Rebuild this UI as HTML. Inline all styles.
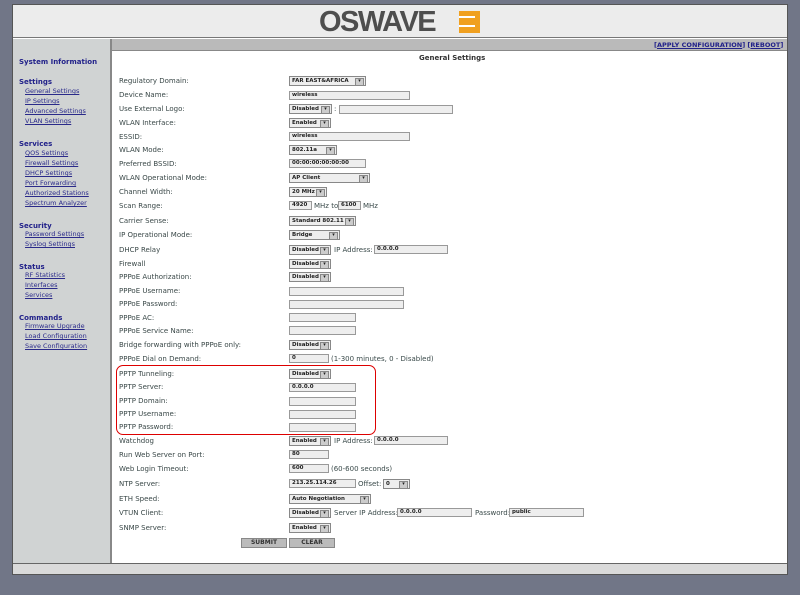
<!DOCTYPE html><html><head><style>
*{margin:0;padding:0;box-sizing:border-box}
body{width:800px;height:595px;background:#717687;position:relative;overflow:hidden;font-family:"DejaVu Sans","Liberation Sans",sans-serif;font-size:7px;color:#3a4a4a}
.a{position:absolute;white-space:nowrap}
.frame{left:12px;top:4px;width:776px;height:571px;background:#fff;border:1px solid #555}
.hdr{left:13px;top:5px;width:774px;height:33px;background:#ececec;border-bottom:1px solid #777}
.bar{left:13px;top:39px;width:774px;height:12px;background:#bababa;border-bottom:1px solid #888}
.side{left:13px;top:39px;width:99px;height:525px;background:#d0d3d3;border-right:2px solid #888}
.foot{left:13px;top:563px;width:774px;height:11px;background:#dadada;border-top:1px solid #666}
.sh{color:#22228a;font-weight:bold;font-size:7px}
.sl{color:#2a2a8a;text-decoration:underline;font-size:6.5px}
.lb{left:119px;color:#3a4848;font-size:7px}
.in{height:9px;background:#eee;border:1px solid #999;font-size:5.5px;font-weight:bold;color:#222;line-height:7px;padding-left:2px}
.se{height:10px;background:#eee;border:1px solid #888;font-size:5.5px;font-weight:bold;color:#222;line-height:8px;padding-left:2px;overflow:hidden}
.se:after{content:"▾";position:absolute;right:1px;top:1px;width:7px;height:6px;background:#ccc;border:1px solid #888;font-size:5px;line-height:5px;text-align:center}
.bt{height:10px;background:#bbb;border:1px solid #888;font-size:6px;font-weight:bold;text-align:center;line-height:8px;color:#333}
</style></head><body>
<div class="a frame"></div>
<div class="a hdr"></div>
<div class="a" style="left:319px;top:8px;font-family:'Liberation Sans',sans-serif;font-size:29px;font-weight:bold;color:#4e4e4e;letter-spacing:-1.5px;line-height:29px">OSWAVE</div>
<div class="a" style="left:459px;top:11px;width:21px;height:22px;background:#f0a020"></div>
<div class="a" style="left:459px;top:16px;width:16px;height:2px;background:#fff"></div>
<div class="a" style="left:459px;top:25px;width:16px;height:2px;background:#fff"></div>
<div class="a bar"></div>
<div class="a side"></div>
<div class="a foot"></div>
<div class="a" style="left:654px;top:41px;font-size:6.5px;color:#22228a;font-weight:bold">[<u>APPLY CONFIGURATION</u>] [<u>REBOOT</u>]</div>
<div class="a" style="left:419px;top:54px;font-weight:bold;color:#333">General Settings</div>
<div class="a sh" style="left:19px;top:58px">System Information</div>
<div class="a sh" style="left:19px;top:78px">Settings</div>
<div class="a sl" style="left:25px;top:87px">General Settings</div>
<div class="a sl" style="left:25px;top:97px">IP Settings</div>
<div class="a sl" style="left:25px;top:107px">Advanced Settings</div>
<div class="a sl" style="left:25px;top:117px">VLAN Settings</div>
<div class="a sh" style="left:19px;top:140px">Services</div>
<div class="a sl" style="left:25px;top:149px">QOS Settings</div>
<div class="a sl" style="left:25px;top:159px">Firewall Settings</div>
<div class="a sl" style="left:25px;top:169px">DHCP Settings</div>
<div class="a sl" style="left:25px;top:179px">Port Forwarding</div>
<div class="a sl" style="left:25px;top:189px">Authorized Stations</div>
<div class="a sl" style="left:25px;top:199px">Spectrum Analyzer</div>
<div class="a sh" style="left:19px;top:222px">Security</div>
<div class="a sl" style="left:25px;top:230px">Password Settings</div>
<div class="a sl" style="left:25px;top:240px">Syslog Settings</div>
<div class="a sh" style="left:19px;top:263px">Status</div>
<div class="a sl" style="left:25px;top:271px">RF Statistics</div>
<div class="a sl" style="left:25px;top:281px">Interfaces</div>
<div class="a sl" style="left:25px;top:291px">Services</div>
<div class="a sh" style="left:19px;top:314px">Commands</div>
<div class="a sl" style="left:25px;top:322px">Firmware Upgrade</div>
<div class="a sl" style="left:25px;top:332px">Load Configuration</div>
<div class="a sl" style="left:25px;top:342px">Save Configuration</div>
<div class="a" style="left:116px;top:365px;width:260px;height:70px;border:1px solid #d00;border-radius:7px"></div>

<div class="a lb" style="top:77px">Regulatory Domain:</div><div class="a se" style="left:289px;top:76px;width:77px">FAR EAST&amp;AFRICA</div>
<div class="a lb" style="top:91px">Device Name:</div><div class="a in" style="left:289px;top:91px;width:121px">wireless</div>
<div class="a lb" style="top:105px">Use External Logo:</div><div class="a se" style="left:289px;top:104px;width:43px">Disabled</div><div class="a" style="left:334px;top:105px">:</div><div class="a in" style="left:339px;top:105px;width:114px"></div>
<div class="a lb" style="top:119px">WLAN Interface:</div><div class="a se" style="left:289px;top:118px;width:42px">Enabled</div>
<div class="a lb" style="top:133px">ESSID:</div><div class="a in" style="left:289px;top:132px;width:121px">wireless</div>
<div class="a lb" style="top:146px">WLAN Mode:</div><div class="a se" style="left:289px;top:145px;width:48px">802.11a</div>
<div class="a lb" style="top:160px">Preferred BSSID:</div><div class="a in" style="left:289px;top:159px;width:77px">00:00:00:00:00:00</div>
<div class="a lb" style="top:174px">WLAN Operational Mode:</div><div class="a se" style="left:289px;top:173px;width:81px">AP Client</div>
<div class="a lb" style="top:188px">Channel Width:</div><div class="a se" style="left:289px;top:187px;width:38px">20 MHz</div>
<div class="a lb" style="top:202px">Scan Range:</div><div class="a in" style="left:289px;top:201px;width:23px">4920</div><div class="a" style="left:314px;top:202px">MHz to</div><div class="a in" style="left:338px;top:201px;width:23px">6100</div><div class="a" style="left:363px;top:202px">MHz</div>
<div class="a lb" style="top:217px">Carrier Sense:</div><div class="a se" style="left:289px;top:216px;width:67px">Standard 802.11</div>
<div class="a lb" style="top:231px">IP Operational Mode:</div><div class="a se" style="left:289px;top:230px;width:51px">Bridge</div>
<div class="a lb" style="top:246px">DHCP Relay</div><div class="a se" style="left:289px;top:245px;width:42px">Disabled</div><div class="a" style="left:334px;top:246px">IP Address:</div><div class="a in" style="left:374px;top:245px;width:74px">0.0.0.0</div>
<div class="a lb" style="top:260px">Firewall</div><div class="a se" style="left:289px;top:259px;width:42px">Disabled</div>
<div class="a lb" style="top:273px">PPPoE Authorization:</div><div class="a se" style="left:289px;top:272px;width:42px">Disabled</div>
<div class="a lb" style="top:287px">PPPoE Username:</div><div class="a in" style="left:289px;top:287px;width:115px"></div>
<div class="a lb" style="top:300px">PPPoE Password:</div><div class="a in" style="left:289px;top:300px;width:115px"></div>
<div class="a lb" style="top:314px">PPPoE AC:</div><div class="a in" style="left:289px;top:313px;width:67px"></div>
<div class="a lb" style="top:327px">PPPoE Service Name:</div><div class="a in" style="left:289px;top:326px;width:67px"></div>
<div class="a lb" style="top:341px">Bridge forwarding with PPPoE only:</div><div class="a se" style="left:289px;top:340px;width:42px">Disabled</div>
<div class="a lb" style="top:355px">PPPoE Dial on Demand:</div><div class="a in" style="left:289px;top:354px;width:40px">0</div><div class="a" style="left:331px;top:355px">(1-300 minutes, 0 - Disabled)</div>
<div class="a lb" style="top:370px">PPTP Tunneling:</div><div class="a se" style="left:289px;top:369px;width:42px">Disabled</div>
<div class="a lb" style="top:383px">PPTP Server:</div><div class="a in" style="left:289px;top:383px;width:67px">0.0.0.0</div>
<div class="a lb" style="top:397px">PPTP Domain:</div><div class="a in" style="left:289px;top:397px;width:67px"></div>
<div class="a lb" style="top:410px">PPTP Username:</div><div class="a in" style="left:289px;top:410px;width:67px"></div>
<div class="a lb" style="top:423px">PPTP Password:</div><div class="a in" style="left:289px;top:423px;width:67px"></div>
<div class="a lb" style="top:437px">Watchdog</div><div class="a se" style="left:289px;top:436px;width:42px">Enabled</div><div class="a" style="left:334px;top:437px">IP Address:</div><div class="a in" style="left:374px;top:436px;width:74px">0.0.0.0</div>
<div class="a lb" style="top:451px">Run Web Server on Port:</div><div class="a in" style="left:289px;top:450px;width:40px">80</div>
<div class="a lb" style="top:465px">Web Login Timeout:</div><div class="a in" style="left:289px;top:464px;width:40px">600</div><div class="a" style="left:331px;top:465px">(60-600 seconds)</div>
<div class="a lb" style="top:480px">NTP Server:</div><div class="a in" style="left:289px;top:479px;width:67px">213.25.114.26</div><div class="a" style="left:358px;top:480px">Offset:</div><div class="a se" style="left:383px;top:479px;width:27px">0</div>
<div class="a lb" style="top:495px">ETH Speed:</div><div class="a se" style="left:289px;top:494px;width:82px">Auto Negotiation</div>
<div class="a lb" style="top:509px">VTUN Client:</div><div class="a se" style="left:289px;top:508px;width:42px">Disabled</div><div class="a" style="left:334px;top:509px">Server IP Address:</div><div class="a in" style="left:397px;top:508px;width:75px">0.0.0.0</div><div class="a" style="left:475px;top:509px">Password:</div><div class="a in" style="left:509px;top:508px;width:75px">public</div>
<div class="a lb" style="top:524px">SNMP Server:</div><div class="a se" style="left:289px;top:523px;width:42px">Enabled</div>
<div class="a bt" style="left:241px;top:538px;width:46px">SUBMIT</div>
<div class="a bt" style="left:289px;top:538px;width:46px">CLEAR</div>
</body></html>
